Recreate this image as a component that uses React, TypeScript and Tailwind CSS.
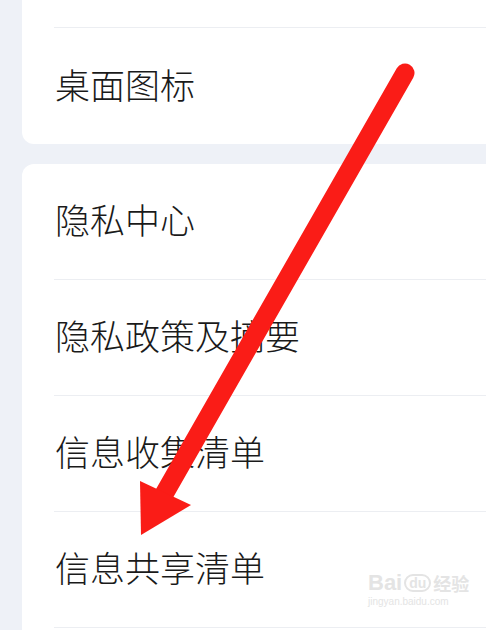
import React from "react";

const font = { fontFamily: '"Noto Sans CJK SC", "Noto Sans", sans-serif' };

function Row({ label, h = "h-[115px]" }: { label?: string; h?: string }) {
    return (
        <div className={`${h} flex items-center pl-[33px] pb-[6px] text-[35px] font-light text-[#1a1a1a] leading-none`}>
            {label}
        </div>
    );
}

function Divider() {
    return <div className="ml-[32px] h-px bg-[#eceef2]" />;
}

export default function App() {
    return (
        <div className="relative w-[486px] h-[630px] overflow-hidden bg-[#eef1f7]" style={font}>
            <div className="pl-[22px]">
                {/* top card, scrolled partly out of view */}
                <div className="-mt-[89px] w-[490px] rounded-[12px] bg-white">
                    <Row h="h-[116px]" />
                    <Divider />
                    <Row label="桌面图标" h="h-[116px]" />
                </div>

                <div className="mt-[20px] w-[490px] rounded-[12px] bg-white">
                    <Row label="隐私中心" />
                    <Divider />
                    <Row label="隐私政策及摘要" />
                    <Divider />
                    <Row label="信息收集清单" />
                    <Divider />
                    <Row label="信息共享清单" />
                    <Divider />
                    <Row />
                </div>
            </div>

            {/* watermark */}
            <div className="absolute left-[368px] top-[572px] text-[#e4e4e4] leading-none select-none">
                <div className="flex items-center gap-[2px] text-[22px] font-bold" style={{ fontFamily: '"Liberation Sans", sans-serif' }}>
                    <span>Bai</span>
                    <span className="rounded-full border-2 border-[#e4e4e4] px-[3px] text-[14px]">du</span>
                    <span className="text-[18px]" style={font}>经验</span>
                </div>
                <div className="mt-[3px] text-[10px]" style={{ fontFamily: '"Liberation Sans", sans-serif' }}>
                    jingyan.baidu.com
                </div>
            </div>

            {/* red arrow annotation */}
            <svg className="absolute inset-0" width="486" height="630" viewBox="0 0 486 630">
                <line x1="405" y1="73" x2="163" y2="496" stroke="#fa1c17" strokeWidth="19" strokeLinecap="round" />
                <polygon points="140,481 141,535 191,505" fill="#fa1c17" />
            </svg>
        </div>
    );
}
